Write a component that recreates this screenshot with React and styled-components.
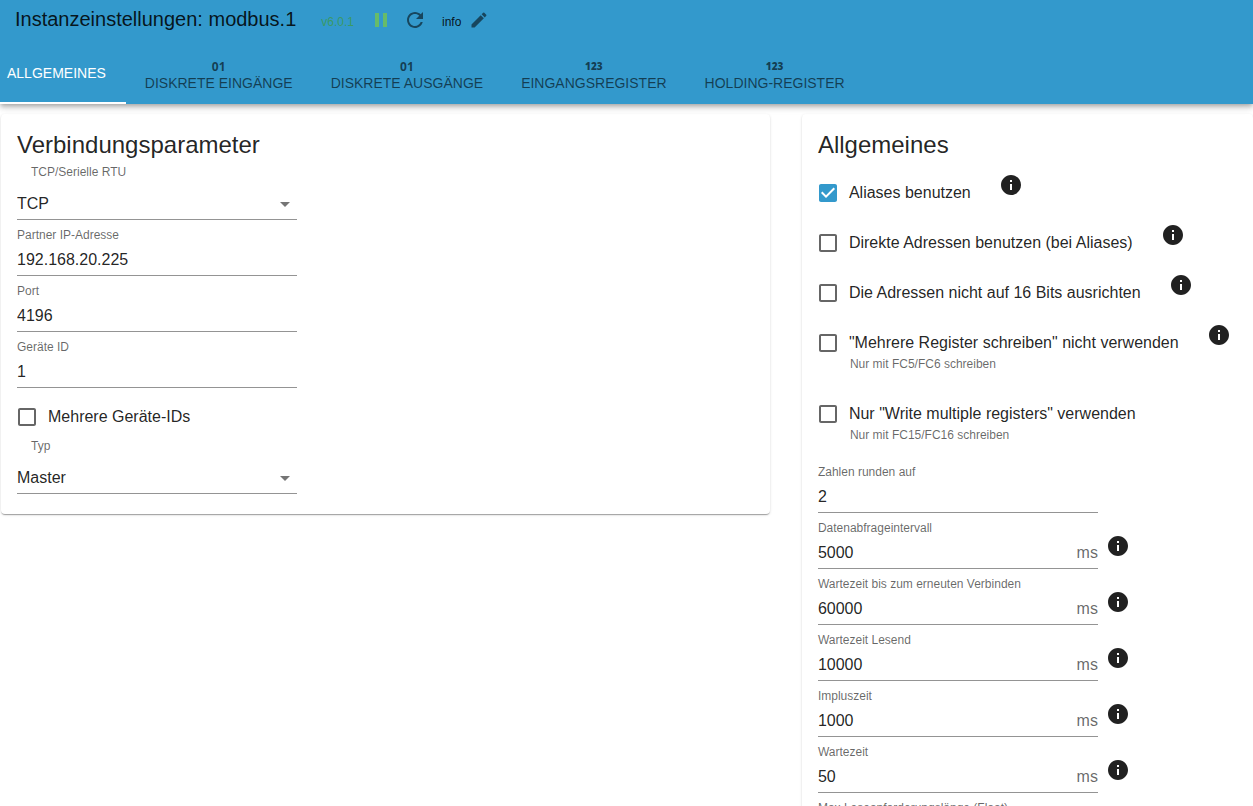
import { useState } from "react";
import styled, { createGlobalStyle } from "styled-components";

const GlobalStyle = createGlobalStyle`
  * {
    box-sizing: border-box;
  }

  body {
    margin: 0;
    background: #fff;
    color: rgba(0, 0, 0, 0.87);
    font-family: Arial, "Liberation Sans", sans-serif;
    font-size: 16px;
  }

  button,
  input,
  select {
    font: inherit;
    color: inherit;
  }
`;

const Page = styled.div`
  display: flex;
  flex-direction: column;
  height: 100vh;
  overflow: hidden;
`;

const AppBar = styled.header`
  position: relative;
  flex: none;
  background: #3399cc;
  box-shadow: 0 2px 4px -1px rgba(0, 0, 0, 0.2), 0 4px 5px rgba(0, 0, 0, 0.14),
    0 1px 10px rgba(0, 0, 0, 0.12);
`;

const Toolbar = styled.div`
  display: flex;
  align-items: center;
  height: 44px;
  padding: 0 15px 4px;
`;

const Title = styled.h1`
  margin: 0 25px 2px 0;
  font-size: 20px;
  font-weight: 400;
  line-height: 24px;
`;

const Version = styled.span`
  margin-right: 15px;
  padding-top: 4px;
  color: #3a9a68;
  font-size: 12px;
`;

const IconButton = styled.button`
  display: flex;
  margin-right: 10px;
  padding: 0;
  border: 0;
  background: none;
  color: ${(props) => props.$color || "rgba(0, 0, 0, 0.54)"};
  cursor: pointer;
`;

const LogLevel = styled.span`
  margin: 0 8px 0 5px;
  padding-top: 3px;
  font-size: 12px;
`;

const Tabs = styled.nav`
  display: flex;
  height: 60px;
`;

const Tab = styled.button`
  display: flex;
  flex-direction: column;
  align-items: center;
  justify-content: center;
  padding: ${(props) => (props.$marked ? "4px 19px 0" : "0 20px 0 7px")};
  border: 0;
  border-bottom: 2px solid ${(props) => (props.$active ? "#fff" : "transparent")};
  background: none;
  color: ${(props) => (props.$active ? "#fff" : "rgba(0, 0, 0, 0.6)")};
  font-size: 14px;
  line-height: 18px;
  text-transform: uppercase;
  white-space: nowrap;
  cursor: pointer;
`;

const TabMark = styled.span`
  font-size: ${(props) => (props.$small ? "10px" : "12px")};
  font-family: "Open Sans", Arial, sans-serif;
  font-weight: ${(props) => (props.$small ? "800" : "700")};
  line-height: 15px;
`;

const Content = styled.main`
  display: grid;
  grid-template-columns: 75fr 44fr;
  gap: 32px;
  align-items: start;
  padding: 10px 0 16px 1px;
`;

const Card = styled.section`
  padding: 16px 16px 20px;
  border-radius: 4px;
  background: #fff;
  box-shadow: 0 2px 1px -1px rgba(0, 0, 0, 0.2), 0 1px 1px rgba(0, 0, 0, 0.14),
    0 1px 3px rgba(0, 0, 0, 0.12);
`;

const CardTitle = styled.h2`
  margin: 0 0 2px;
  font-size: 24px;
  font-weight: 400;
  line-height: 30px;
`;

const FieldRow = styled.div`
  display: flex;
  align-items: center;
  gap: 8px;

  > svg {
    margin-top: 10px;
  }
`;

const FieldBox = styled.div`
  display: flex;
  flex-direction: column;
  width: 280px;
  height: ${(props) => (props.$tall ? "58px" : "56px")};
  padding-top: ${(props) => (props.$tall ? "3px" : "8px")};
  border-bottom: 1px solid #949494;
`;

const FieldLabel = styled.label`
  padding-left: ${(props) => (props.$indent ? "14px" : "0")};
  color: rgba(0, 0, 0, 0.6);
  font-size: 12px;
  line-height: 15px;
`;

const InputLine = styled.div`
  display: flex;
  flex: 1;
  align-items: center;
  padding-top: 1px;
  color: ${(props) => (props.$unit ? "rgba(0, 0, 0, 0.6)" : "inherit")};
`;

const TextInput = styled.input`
  flex: 1;
  min-width: 0;
  height: 24px;
  padding: 0;
  border: 0;
  outline: 0;
  background: none;
  color: rgba(0, 0, 0, 0.87);
`;

const SelectWrap = styled.div`
  display: grid;
  flex: 1;
  align-items: center;
  padding-top: 8px;

  > * {
    grid-area: 1 / 1;
  }

  svg {
    justify-self: end;
    color: rgba(0, 0, 0, 0.54);
    pointer-events: none;
  }
`;

const Select = styled.select`
  width: 100%;
  height: 24px;
  padding: 0;
  border: 0;
  outline: 0;
  background: none;
  appearance: none;
`;

const CheckGroup = styled.div`
  display: flex;
  flex-direction: column;
  gap: 9px;
  padding: ${(props) => (props.$spaced ? "9px 0 3px" : "7px 0 0")};
`;

const CheckItem = styled.div`
  height: ${(props) => (props.$helper ? "62px" : "41px")};
`;

const CheckRow = styled.div`
  display: flex;
  align-items: flex-start;
  gap: 28px;

  > svg {
    margin-top: 2px;
  }
`;

const CheckLabel = styled.label`
  display: flex;
  align-items: center;
  gap: 9px;
  height: 36px;
  margin-left: -2px;
  padding-top: 8px;
  white-space: nowrap;
  cursor: pointer;
`;

const CheckBox = styled.span`
  display: grid;
  color: ${(props) => (props.$checked ? "#3399cc" : "rgba(0, 0, 0, 0.6)")};

  > * {
    grid-area: 1 / 1;
  }

  input {
    width: 24px;
    height: 24px;
    margin: 0;
    opacity: 0;
  }
`;

const HelperText = styled.p`
  margin: 0;
  padding-left: 32px;
  color: rgba(0, 0, 0, 0.6);
  font-size: 12px;
  line-height: 15px;
`;

const icons = {
  pause: "M6 19h4V5H6v14zm8-14v14h4V5h-4z",
  refresh:
    "M17.65 6.35C16.2 4.9 14.21 4 12 4c-4.42 0-7.99 3.58-7.99 8s3.57 8 7.99 8c3.73 0 6.84-2.55 7.73-6h-2.08c-.82 2.33-3.04 4-5.65 4-3.31 0-6-2.69-6-6s2.69-6 6-6c1.66 0 3.14.69 4.22 1.78L13 11h7V4l-2.35 2.35z",
  edit: "M3 17.25V21h3.75L17.81 9.94l-3.75-3.75L3 17.25zM20.71 7.04c.39-.39.39-1.02 0-1.41l-2.34-2.34a.9959.9959 0 0 0-1.41 0l-1.83 1.83 3.75 3.75 1.83-1.83z",
  info: "M12 2C6.48 2 2 6.48 2 12s4.48 10 10 10 10-4.48 10-10S17.52 2 12 2zm1 15h-2v-6h2v6zm0-8h-2V7h2v2z",
  dropDown: "M7 10l5 5 5-5z",
  unchecked:
    "M19 5v14H5V5h14m0-2H5c-1.1 0-2 .9-2 2v14c0 1.1.9 2 2 2h14c1.1 0 2-.9 2-2V5c0-1.1-.9-2-2-2z",
  checked:
    "M19 3H5c-1.11 0-2 .9-2 2v14c0 1.1.89 2 2 2h14c1.11 0 2-.9 2-2V5c0-1.1-.89-2-2-2zm-9 14l-5-5 1.41-1.41L10 14.17l7.59-7.59L19 8l-9 9z"
};

function Icon({ name, size = 24 }) {
  return (
    <svg width={size} height={size} viewBox="0 0 24 24" fill="currentColor" aria-hidden="true">
      <path d={icons[name]} />
    </svg>
  );
}

function TextField({ id, label, value, unit, info }) {
  return (
    <FieldRow>
      <FieldBox>
        <FieldLabel htmlFor={id}>{label}</FieldLabel>
        <InputLine $unit={unit}>
          <TextInput id={id} defaultValue={value} />
          {unit}
        </InputLine>
      </FieldBox>
      {info && <Icon name="info" />}
    </FieldRow>
  );
}

function SelectField({ id, label, options }) {
  return (
    <FieldBox $tall>
      <FieldLabel htmlFor={id} $indent>
        {label}
      </FieldLabel>
      <SelectWrap>
        <Select id={id}>
          {options.map((option) => (
            <option key={option}>{option}</option>
          ))}
        </Select>
        <Icon name="dropDown" />
      </SelectWrap>
    </FieldBox>
  );
}

function CheckField({ label, helper, info, initial = false }) {
  const [checked, setChecked] = useState(initial);
  return (
    <CheckItem $helper={helper}>
      <CheckRow>
        <CheckLabel>
          <CheckBox $checked={checked}>
            <Icon name={checked ? "checked" : "unchecked"} />
            <input type="checkbox" checked={checked} onChange={() => setChecked(!checked)} />
          </CheckBox>
          {label}
        </CheckLabel>
        {info && <Icon name="info" />}
      </CheckRow>
      {helper && <HelperText>{helper}</HelperText>}
    </CheckItem>
  );
}

const tabs = [
  { label: "Allgemeines" },
  { label: "Diskrete Eingänge", mark: "01" },
  { label: "Diskrete Ausgänge", mark: "01" },
  { label: "Eingangsregister", mark: "123" },
  { label: "Holding-Register", mark: "123" }
];

const checks = [
  { label: "Aliases benutzen", info: true, initial: true },
  { label: "Direkte Adressen benutzen (bei Aliases)", info: true },
  { label: "Die Adressen nicht auf 16 Bits ausrichten", info: true },
  {
    label: '"Mehrere Register schreiben" nicht verwenden',
    helper: "Nur mit FC5/FC6 schreiben",
    info: true
  },
  {
    label: 'Nur "Write multiple registers" verwenden',
    helper: "Nur mit FC15/FC16 schreiben"
  }
];

const connection = [
  { id: "ip", label: "Partner IP-Adresse", value: "192.168.20.225" },
  { id: "port", label: "Port", value: "4196" },
  { id: "deviceId", label: "Geräte ID", value: "1" }
];

const general = [
  { id: "round", label: "Zahlen runden auf", value: "2" },
  { id: "poll", label: "Datenabfrageintervall", value: "5000", unit: "ms", info: true },
  { id: "recon", label: "Wartezeit bis zum erneuten Verbinden", value: "60000", unit: "ms", info: true },
  { id: "readTimeout", label: "Wartezeit Lesend", value: "10000", unit: "ms", info: true },
  { id: "pulse", label: "Impluszeit", value: "1000", unit: "ms", info: true },
  { id: "wait", label: "Wartezeit", value: "50", unit: "ms", info: true },
  { id: "maxBlock", label: "Max Leseanforderungslänge (Float)", value: "" }
];

export default function App() {
  const [active, setActive] = useState(0);

  return (
    <Page>
      <GlobalStyle />
      <AppBar>
        <Toolbar>
          <Title>Instanzeinstellungen: modbus.1</Title>
          <Version>v6.0.1</Version>
          <IconButton $color="#66bb6a" aria-label="Pause">
            <Icon name="pause" />
          </IconButton>
          <IconButton aria-label="Neu starten">
            <Icon name="refresh" />
          </IconButton>
          <LogLevel>info</LogLevel>
          <IconButton aria-label="Bearbeiten">
            <Icon name="edit" size={20} />
          </IconButton>
        </Toolbar>
        <Tabs>
          {tabs.map((tab, i) => (
            <Tab key={tab.label} $marked={tab.mark} $active={i === active} onClick={() => setActive(i)}>
              {tab.mark && <TabMark $small={tab.mark.length > 2}>{tab.mark}</TabMark>}
              {tab.label}
            </Tab>
          ))}
        </Tabs>
      </AppBar>
      <Content>
        <Card>
          <CardTitle>Verbindungsparameter</CardTitle>
          <SelectField id="tcp" label="TCP/Serielle RTU" options={["TCP", "Serielle RTU"]} />
          {connection.map((field) => (
            <TextField key={field.id} {...field} />
          ))}
          <CheckGroup>
            <CheckField label="Mehrere Geräte-IDs" />
          </CheckGroup>
          <SelectField id="type" label="Typ" options={["Master", "Slave"]} />
        </Card>
        <Card>
          <CardTitle>Allgemeines</CardTitle>
          <CheckGroup $spaced>
            {checks.map((check) => (
              <CheckField key={check.label} {...check} />
            ))}
          </CheckGroup>
          {general.map((field) => (
            <TextField key={field.id} {...field} />
          ))}
        </Card>
      </Content>
    </Page>
  );
}
